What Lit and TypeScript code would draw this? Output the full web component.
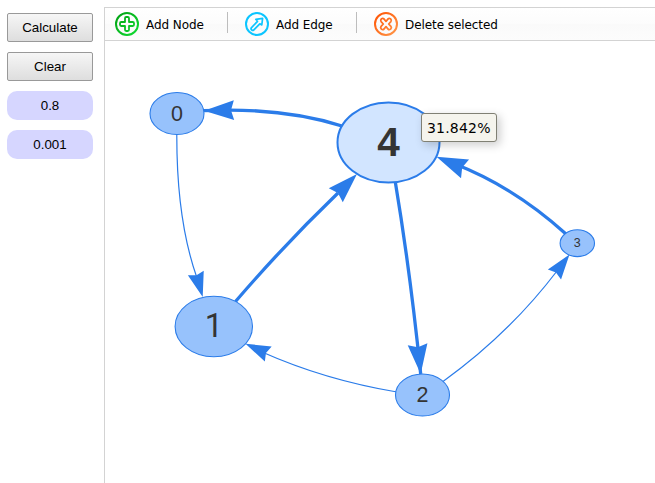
import { LitElement, html, svg, css } from "lit";
import { customElement } from "lit/decorators.js";

interface GraphNode { label: string; x: number; y: number; rx: number; ry: number; font: number; base: number; selected?: boolean; family?: string; }
interface GraphEdge { path: string; width: number; tip: [number, number]; angle: number; size: number; }

const SANS = "Liberation Sans, Arial, sans-serif";

const NODES: GraphNode[] = [
  { label: "0", x: 177, y: 113.5, rx: 27, ry: 21, font: 21.5, base: 120.5 },
  { label: "1", x: 213.8, y: 326.5, rx: 38.7, ry: 30.2, font: 32.5, base: 337.3, family: "Roboto, Arial, sans-serif" },
  { label: "2", x: 422.5, y: 395, rx: 27, ry: 21, font: 21.5, base: 402.3 },
  { label: "3", x: 577.3, y: 243.2, rx: 17.2, ry: 13.4, font: 12.5, base: 247.3 },
  { label: "4", x: 388.5, y: 142.4, rx: 51, ry: 40, font: 40.5, base: 156, selected: true },
];

const EDGES: GraphEdge[] = [
  { path: "M176.8 134 Q176.5 220 197 278", width: 1.2, tip: [202.7, 297], angle: 74, size: 25 },
  { path: "M235.5 301.5 Q285 244 338 193", width: 3.3, tip: [357, 174], angle: -45, size: 30 },
  { path: "M342 126 Q282 107 204 110.7", width: 3.3, tip: [204, 110.7], angle: 179, size: 30 },
  { path: "M395.3 182 Q410 270 420.7 374", width: 3.3, tip: [420.7, 374], angle: 84, size: 30 },
  { path: "M397 392 Q325 380 262 352", width: 1.2, tip: [245.5, 343.7], angle: 204.5, size: 25 },
  { path: "M443 381.5 Q509 334 557 271", width: 1.2, tip: [569.5, 254.5], angle: -53, size: 25 },
  { path: "M566 234 Q514 187 455 164", width: 3.3, tip: [436.5, 156.7], angle: 203, size: 31 },
];

@customElement("network-toolbar")
class NetworkToolbar extends LitElement {
  static styles = css`
    :host { display: flex; box-sizing: border-box; height: 34px; border-top: 1px solid #d3d3d3; border-bottom: 1px solid #d3d3d3; padding-left: 10px; background: linear-gradient(#fff, #fcfcfc 50%, #fafafa 51%, #fcfcfc); font: 12px "DejaVu Sans", sans-serif; color: #000; }
    .item { display: flex; height: 24px; margin-top: 4px; align-items: center; white-space: nowrap; }
    .icon { width: 24px; height: 24px; margin-right: 7px; fill: none; stroke-width: 2; stroke-linejoin: round; flex: none; }
    .line { width: 1px; height: 21px; margin-top: 4px; background: #bdbdbd; }
    .node { width: 112px; }
    .edge { width: 111px; margin-left: 17px; }
    .delete { margin-left: 17px; }
    .label { line-height: 24px; padding-top: 1px; letter-spacing: -0.07px; }
  `;
  render() {
    return html`
      <div class="item node"><svg class="icon" viewBox="0 0 24 24" stroke="url(#g)"><defs><linearGradient id="g" gradientUnits="userSpaceOnUse" x1="0" y1="0" x2="24" y2="24"><stop stop-color="#009c10"/><stop offset="1" stop-color="#12e035"/></linearGradient></defs><circle cx="12" cy="12" r="11"/><path stroke-width="1.8" d="M10 6.2Q10 5 11.2 5h1.6Q14 5 14 6.2V10h3.8Q19 10 19 11.2v1.6Q19 14 17.8 14H14v3.8Q14 19 12.8 19h-1.6Q10 19 10 17.8V14H6.2Q5 14 5 12.8v-1.6Q5 10 6.2 10H10z"/></svg><span class="label">Add Node</span></div>
      <div class="line"></div>
      <div class="item edge"><svg class="icon" viewBox="0 0 24 24" stroke="#0cc5ff"><circle cx="12" cy="12" r="11"/><path stroke-width="1.7" d="M10.8 7.3 17.6 6.4 16.8 13 14.8 11.8 8.6 18.2Q7.6 18.8 6.6 17.8 5.6 16.8 6.3 15.8L12.5 9.3z"/></svg><span class="label">Add Edge</span></div>
      <div class="line"></div>
      <div class="item delete"><svg class="icon" viewBox="0 0 24 24" stroke="url(#d)"><defs><linearGradient id="d" gradientUnits="userSpaceOnUse" x1="0" y1="0" x2="24" y2="24"><stop stop-color="#ff5000"/><stop offset="1" stop-color="#ff9a4c"/></linearGradient></defs><circle cx="12" cy="12" r="11"/><path stroke-width="1.8" d="M7.4 6.9Q8.8 5.8 10 7L12 9.4 14 7Q15.2 5.8 16.6 6.9 18 8.4 16.9 9.7L14.7 12l2.2 2.3Q18 15.6 16.6 17.1 15.2 18.2 14 17L12 14.6 10 17Q8.8 18.2 7.4 17.1 6 15.6 7.1 14.3L9.3 12 7.1 9.7Q6 8.4 7.4 6.9z"/></svg><span class="label">Delete selected</span></div>`;
  }
}

@customElement("app-root")
class AppRoot extends LitElement {
  static styles = css`
    :host { display: flex; position: relative; width: 655px; height: 483px; overflow: hidden; background: #fff; font-family: "Liberation Sans", Arial, sans-serif; }
    .side { display: flex; flex-direction: column; gap: 10px; width: 86px; padding: 13px 11px 0 7px; flex: none; }
    .btn, .field { box-sizing: border-box; width: 86px; height: 29px; padding: 0; font: 13.33px/27px "Liberation Sans", Arial, sans-serif; text-align: center; color: #000; }
    .btn { border: 1px solid #999; border-radius: 2px; background: linear-gradient(#f6f6f6, #dedede); }
    .field { border: 0; border-radius: 10px; background: #d6d6ff; }
    .network { flex: 1; margin-top: 7px; border-left: 1px solid #d3d3d3; }
    .canvas { display: block; width: 550px; height: 442px; }
    .tip { position: absolute; left: 421px; top: 113px; box-sizing: border-box; width: 76px; height: 29px; border: 1px solid #808074; border-radius: 3px; background: #f5f4ed; box-shadow: 3px 3px 10px rgba(0,0,0,.2); padding-left: 5px; font: 14px/29px "DejaVu Sans", sans-serif; letter-spacing: 0.2px; color: #000; white-space: nowrap; }
  `;
  render() {
    return html`
      <div class="side">
        <button class="btn">Calculate</button><button class="btn">Clear</button>
        <input class="field" .value=${"0.8"}><input class="field" .value=${"0.001"}>
      </div>
      <div class="network">
        <network-toolbar></network-toolbar>
        <svg class="canvas" viewBox="105 41 550 442">
          ${EDGES.map(e => svg`
            <path d=${e.path} fill="none" stroke="#2b7ce9" stroke-width=${e.width}/>
            <path d="M0 0L-1 .33L-.9 0L-1 -.33Z" fill="#2b7ce9" transform=${`translate(${e.tip[0]} ${e.tip[1]}) rotate(${e.angle}) scale(${e.size})`}/>`)}
          ${NODES.map(n => svg`
            <ellipse cx=${n.x} cy=${n.y} rx=${n.rx} ry=${n.ry} fill=${n.selected ? "#d2e5ff" : "#97c2fc"} stroke="#2b7ce9" stroke-width=${n.selected ? 2 : 1.1}/>
            <text x=${n.x} y=${n.base} text-anchor="middle" font-family=${n.family ?? SANS} font-size=${n.font} font-weight=${n.selected ? 700 : 400} fill="#343434">${n.label}</text>`)}
        </svg>
      </div>
      <div class="tip">31.842%</div>`;
  }
}
